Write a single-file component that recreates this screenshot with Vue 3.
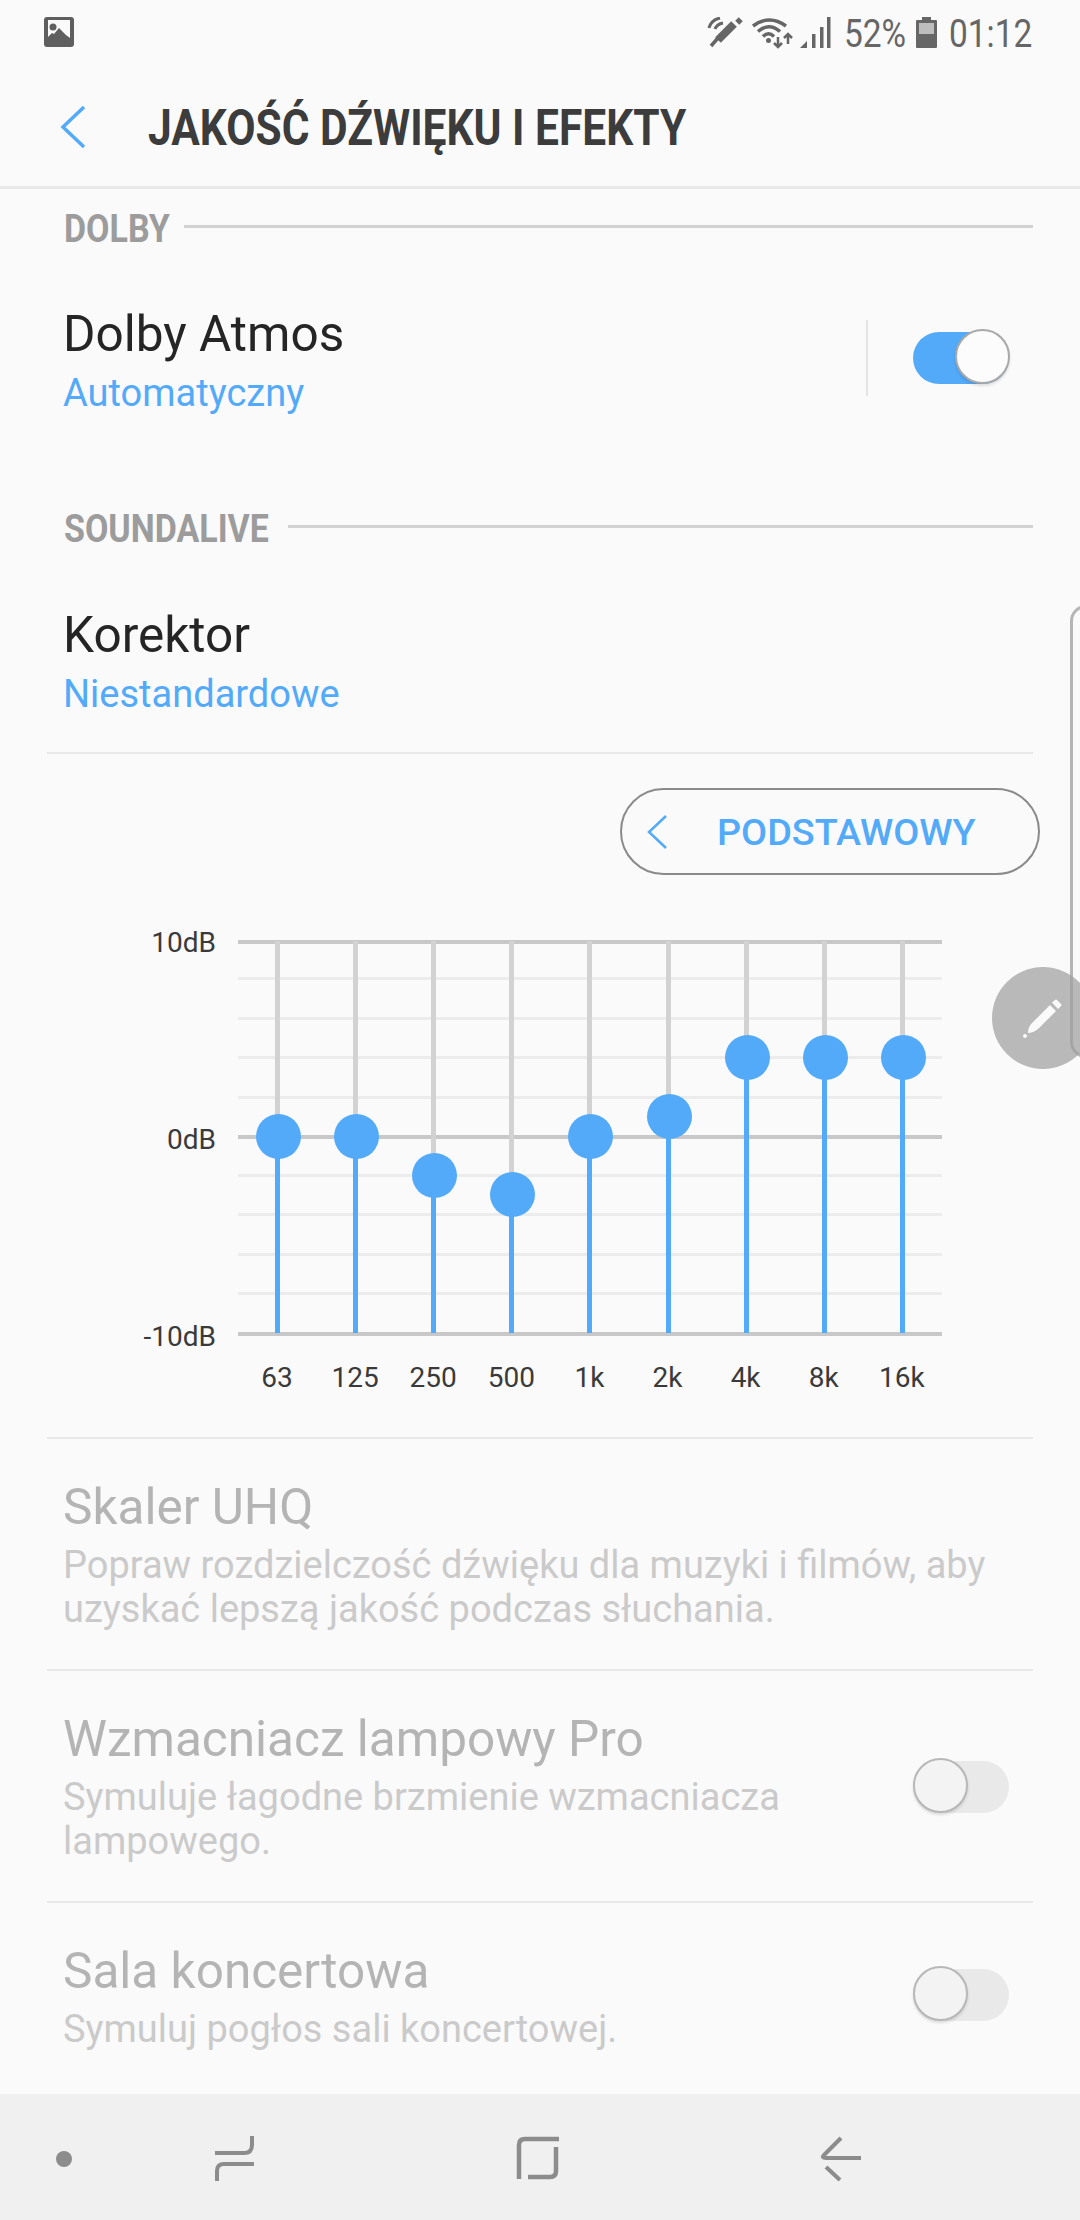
<script setup>
const hLines = [
  { y: 66, major: true }, { y: 103 }, { y: 143 }, { y: 182 }, { y: 222 },
  { y: 261, major: true }, { y: 300 }, { y: 339 }, { y: 379 }, { y: 418 }, { y: 458, major: true },
]
const bands = [
  { label: '63', y: 261 }, { label: '125', y: 261 }, { label: '250', y: 300 },
  { label: '500', y: 319 }, { label: '1k', y: 261 }, { label: '2k', y: 241 },
  { label: '4k', y: 182 }, { label: '8k', y: 182 }, { label: '16k', y: 182 },
].map((b, i) => ({ ...b, x: 277 + i * 78.1 }))
const scale = [
  { label: '10dB', y: 68 }, { label: '0dB', y: 265 }, { label: '-10dB', y: 462 },
]
const rows = [
  { title: 'Skaler UHQ', lines: ['Popraw rozdzielczość dźwięku dla muzyki i filmów, aby', 'uzyskać lepszą jakość podczas słuchania.'], toggle: false },
  { title: 'Wzmacniacz lampowy Pro', lines: ['Symuluje łagodne brzmienie wzmacniacza', 'lampowego.'], toggle: true },
  { title: 'Sala koncertowa', lines: ['Symuluj pogłos sali koncertowej.'], toggle: true },
]
</script>

<template>
  <div class="screen">
    <div class="status">
      <svg class="pic" width="30" height="30" viewBox="0 0 30 30">
        <rect width="30" height="30" rx="3" fill="#5f5f5f" />
        <path d="M4 3h22v18l-4-3-7-7-5 6-2-1-4 4z" fill="#fafafa" />
        <circle cx="9" cy="10" r="3.5" fill="#5f5f5f" />
      </svg>
      <div class="status-right">
        <svg class="status-icons" width="130" height="34" viewBox="0 0 130 34" fill="none">
          <g stroke="#666">
            <path d="M4 11Q6 3 15 1M10 12Q12 7 18 6" stroke-width="3" />
            <path d="M13 23 29 7" stroke-width="8" />
            <path d="M32 2l4 4" stroke-width="5" />
            <path d="M6 29l7-8" stroke-width="3.500" />
            <path d="M48 9Q64.500-3 81 9" stroke-width="3.500" />
            <path d="M53 14.500Q64 5 75 14.500" stroke-width="3.500" />
            <path d="M58 19.500Q63.500 14 69 19.500" stroke-width="3.500" />
            <path d="M73 20v10M69 26l4 4 4-4M83 27V17M79 21l4-4 4 4" stroke-width="2.500" />
          </g>
          <circle cx="63.500" cy="23.500" r="2.500" fill="#666" />
          <path d="M95 31l7-7v7z" fill="#666" />
          <path d="M107 31V17h3.500v14zM115 31V10h3.500v21zM122 31V0h3.500v31z" fill="#666" />
        </svg>
        <span class="status-text pct">52%</span>
        <svg class="battery" width="21" height="31" viewBox="0 0 21 31">
          <path d="M6 0h9v3h5a1 1 0 0 1 1 1v26a1 1 0 0 1-1 1H1a1 1 0 0 1-1-1V4a1 1 0 0 1 1-1h5z" fill="#666" />
          <rect x="3" y="6" width="15" height="11" fill="#bdbdbd" />
        </svg>
        <span class="status-text time">01:12</span>
      </div>
    </div>

    <header class="appbar">
      <svg class="back" width="26" height="44" viewBox="0 0 26 44" fill="none">
        <path d="M24 2 3 22l21 20" stroke="#52aaf9" stroke-width="3.500" />
      </svg>
      <h1 class="title">JAKOŚĆ DŹWIĘKU I EFEKTY</h1>
    </header>

    <main class="content">
      <div class="section"><span class="section-label">DOLBY</span><i class="section-line"></i></div>
      <div class="setting dolby">
        <div class="grow">
          <div class="name">Dolby Atmos</div>
          <div class="value">Automatyczny</div>
        </div>
        <i class="vdiv"></i>
        <span class="toggle on"><i></i></span>
      </div>

      <div class="section"><span class="section-label">SOUNDALIVE</span><i class="section-line"></i></div>
      <div class="setting korektor">
        <div>
          <div class="name">Korektor</div>
          <div class="value">Niestandardowe</div>
        </div>
      </div>
      <hr class="divider" />

      <div class="button-row">
        <div class="pill">
          <svg width="20" height="34" viewBox="0 0 20 34" fill="none">
            <path d="M19 1 2 17l17 16" stroke="#52aaf9" stroke-width="2.500" />
          </svg>
          <span>PODSTAWOWY</span>
        </div>
      </div>

      <div class="chart">
        <i v-for="l in hLines" :key="l.y" class="hline" :class="{ major: l.major }" :style="{ top: l.y + 'px' }"></i>
        <span v-for="s in scale" :key="s.label" class="db" :style="{ top: s.y + 'px' }">{{ s.label }}</span>
        <template v-for="b in bands" :key="b.label">
          <i class="track" :style="{ left: b.x + 'px' }"></i>
          <i class="fill" :style="{ left: b.x + 'px', top: b.y + 'px', height: 458 - b.y + 'px' }"></i>
          <i class="knob" :style="{ left: b.x + 1 + 'px', top: b.y + 'px' }"></i>
          <span class="band" :style="{ left: b.x + 'px' }">{{ b.label }}</span>
        </template>
      </div>
      <hr class="divider" />

      <template v-for="(r, i) in rows" :key="r.title">
        <div class="setting off">
          <div class="off-text">
            <div class="name">{{ r.title }}</div>
            <div v-for="line in r.lines" :key="line" class="desc">{{ line }}</div>
          </div>
          <span v-if="r.toggle" class="toggle" :class="i === 2 ? 'last' : ''"><i></i></span>
        </div>
        <hr v-if="i < 2" class="divider" />
      </template>
    </main>

    <nav class="nav">
      <svg class="n-dot" width="16" height="16" viewBox="0 0 16 16"><circle cx="8" cy="8" r="8" fill="#8c8c8c" /></svg>
      <svg class="n-recent" width="42" height="48" viewBox="0 0 42 48" fill="none">
        <path d="M1 19h29q8 0 8-8V2M40 30H10q-7 0-7 7v10" stroke="#8c8c8c" stroke-width="4" />
      </svg>
      <svg class="n-home" width="44" height="44" viewBox="0 0 44 44" fill="none">
        <path d="M43 3H9Q3 3 3 9v34M40 11v24q0 6-6 6H12" stroke="#8c8c8c" stroke-width="4.500" />
      </svg>
      <svg class="n-back" width="42" height="46" viewBox="0 0 42 46" fill="none">
        <path d="M21 2 4 19q-3 3 2 3h35M6 31l14 13" stroke="#8c8c8c" stroke-width="4" />
      </svg>
    </nav>

    <div class="edge"></div>
    <div class="fab">
      <svg width="102" height="102" viewBox="0 0 102 102">
        <path d="M58 38l6 6-18 18q-5 4-10 4 0-6 4-10zM60 35.500l3-2.500q1-1 2 0l4 4q1 1 0 2l-3 3z" fill="#fafafa" />
        <circle cx="33" cy="69" r="2" fill="#fafafa" />
      </svg>
    </div>
  </div>
</template>

<style>
html, body { margin: 0; background: #fafafa; }
</style>

<style scoped>
.screen {
  position: relative;
  width: 1080px;
  height: 2220px;
  display: flex;
  flex-direction: column;
  overflow: hidden;
  background: #fafafa;
  color: #252525;
  font-family: Roboto, "Liberation Sans", sans-serif;
}
.status {
  height: 64px;
  display: flex;
  align-items: flex-start;
  justify-content: space-between;
  padding: 17px 48px 0 44px;
  box-sizing: border-box;
  flex: none;
}
.pic { display: block; }
.status-right { display: flex; align-items: flex-start; }
.status-icons { display: block; margin-right: 9px; }
.status-text {
  display: block;
  font-size: 38px;
  line-height: 34px;
  color: #666;
  transform-origin: left center;
  transform: scaleX(0.88);
}
.pct { width: 72px; }
.time { width: 83px; }
.battery { display: block; margin-right: 12px; }
.appbar {
  height: 125px;
  flex: none;
  display: flex;
  align-items: center;
  padding-left: 60px;
  box-sizing: border-box;
  border-bottom: 3px solid #e8e8e8;
}
.back { margin-right: 62px; margin-top: 3px; }
.title {
  margin: 5px 0 0;
  font-size: 50px;
  font-weight: 700;
  line-height: 56px;
  color: #3c3c3c;
  white-space: nowrap;
  transform-origin: left center;
  transform: scaleX(0.85);
}
.content { flex: 1; min-height: 0; overflow: hidden; }
.section {
  height: 78px;
  display: flex;
  align-items: center;
  padding: 0 47px 0 64px;
}
.section-label {
  font-size: 39.5px;
  font-weight: 700;
  line-height: 46px;
  margin-top: 2px;
  color: #9c9c9c;
  white-space: nowrap;
  transform-origin: left center;
  transform: scaleX(0.86);
}
.section-line {
  flex: 1;
  height: 3px;
  margin-top: -3px;
  background: #d2d2d2;
}
.section:first-child .section-label { width: 120px; }
.section:not(:first-child) .section-label { width: 224px; }
.setting { display: flex; padding-left: 63px; padding-right: 71px; box-sizing: border-box; }
.grow { flex: 1; }
.name { font-size: 49.5px; line-height: 60px; white-space: nowrap; }
.value { font-size: 38px; line-height: 58px; color: #52aaf9; white-space: nowrap; }
.dolby { height: 222px; padding-top: 37px; }
.vdiv { width: 2px; height: 76px; margin: 16px 45px 0 0; background: #e4e4e4; }
.korektor { height: 185px; padding-top: 38px; }
.divider { margin: 0 47px; height: 2px; border: 0; background: #e8e8e8; }
.toggle {
  position: relative;
  display: block;
  width: 96px;
  height: 52px;
  flex: none;
  border-radius: 26px;
  background: #e9e9e9;
}
.toggle i {
  position: absolute;
  left: 0;
  top: -3px;
  width: 55px;
  height: 55px;
  box-sizing: border-box;
  border-radius: 50%;
  background: #f3f3f3;
  border: 2px solid #b8b8b8;
  box-shadow: 0 2px 3px rgba(0, 0, 0, 0.12);
}
.toggle.on { background: #52aaf9; margin-top: 28px; }
.toggle.on i { left: 42px; background: #fcfcfc; border-color: #a9a9a9; }
.button-row { display: flex; justify-content: flex-end; padding: 34px 40px 0 0; }
.pill {
  width: 420px;
  height: 87px;
  box-sizing: border-box;
  border: 2px solid #8a8a8a;
  border-radius: 44px;
  display: flex;
  align-items: center;
  padding-left: 25px;
}
.pill span {
  margin-left: 50px;
  font-size: 37.8px;
  font-weight: 500;
  color: #52aaf9;
  white-space: nowrap;
}
.chart { position: relative; height: 562px; }
.hline { position: absolute; left: 238px; width: 704px; height: 3px; margin-top: -1px; background: #ececec; }
.hline.major { height: 4px; background: #c8c8c8; }
.track { position: absolute; top: 66px; width: 5px; height: 392px; margin-left: -2px; background: #d2d2d2; }
.fill { position: absolute; width: 5px; margin-left: -2px; background: #52aaf9; }
.knob {
  position: absolute;
  width: 45px;
  height: 45px;
  margin: -22px 0 0 -22px;
  border-radius: 50%;
  background: #52aaf9;
}
.db {
  position: absolute;
  right: 864px;
  transform: translateY(-50%);
  font-size: 28px;
  line-height: 34px;
  color: #3a3a3a;
}
.band {
  position: absolute;
  top: 503px;
  font-size: 28px;
  line-height: 34px;
  color: #3a3a3a;
  transform: translate(-50%, -50%);
}
.off { align-items: flex-start; height: 230px; justify-content: space-between; }
.off-text { padding-top: 38px; }
.off .name { color: #b4b4b4; margin-bottom: 6px; }
.desc { font-size: 38px; line-height: 44px; color: #cacaca; white-space: nowrap; }
.off .toggle { margin-top: 90px; }
.off .toggle.last { margin-top: 66px; }
.nav {
  height: 126px;
  flex: none;
  background: #f0f0f0;
  display: flex;
  align-items: flex-start;
}
.nav svg { display: block; }
.n-dot { margin: 57px 0 0 56px; }
.n-recent { margin: 40px 0 0 142px; }
.n-home { margin: 42px 0 0 260px; }
.n-back { margin: 42px 0 0 260px; }
.edge {
  position: absolute;
  left: 1070px;
  top: 605px;
  width: 30px;
  height: 453px;
  box-sizing: border-box;
  border: 3px solid #b5b5b5;
  border-radius: 16px 0 0 16px;
}
.fab {
  position: absolute;
  left: 992px;
  top: 967px;
  width: 102px;
  height: 102px;
  border-radius: 50%;
  background: rgba(160, 160, 160, 0.72);
}
.fab svg { display: block; }
</style>
